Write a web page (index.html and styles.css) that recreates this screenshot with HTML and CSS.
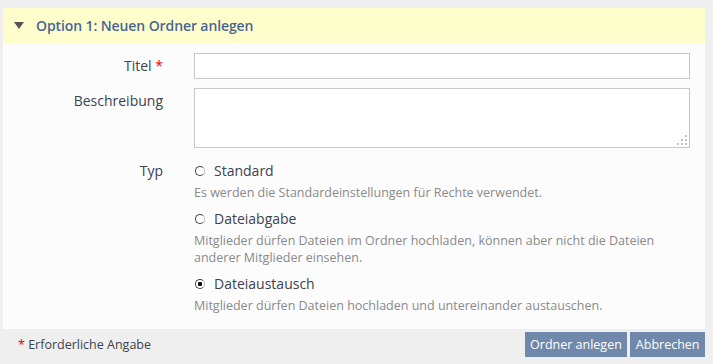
FILE: index.html
```html
<!DOCTYPE html>
<html lang="de">
<head>
    <meta charset="UTF-8">
    <title>Neuen Ordner anlegen</title>
    <link rel="stylesheet" href="styles.css">
</head>
<body>
    <form class="folder-form">
        <fieldset class="panel">
            <div class="panel-head">
                <span class="toggle"></span>
                <span class="panel-title">Option 1: Neuen Ordner anlegen</span>
            </div>

            <div class="panel-body">
                <label class="row-label" for="title">Titel <span class="req">*</span></label>
                <input class="text-input" id="title" type="text">

                <label class="row-label" for="desc">Beschreibung</label>
                <div class="area-wrap">
                    <textarea class="text-area" id="desc"></textarea>
                    <svg class="grip" width="10" height="10" viewBox="0 0 10 10">
                        <rect x="8" y="0" width="2" height="2" fill="#c4c4c4"/>
                        <rect x="4" y="4" width="2" height="2" fill="#c4c4c4"/>
                        <rect x="8" y="4" width="2" height="2" fill="#c4c4c4"/>
                        <rect x="0" y="8" width="2" height="2" fill="#c4c4c4"/>
                        <rect x="4" y="8" width="2" height="2" fill="#c4c4c4"/>
                        <rect x="8" y="8" width="2" height="2" fill="#c4c4c4"/>
                    </svg>
                </div>

                <span class="row-label type-label">Typ</span>
                <div class="type-list">
                    <label class="option">
                        <input class="radio" type="radio" name="type">
                        <span>Standard</span>
                    </label>
                    <p class="hint">Es werden die Standardeinstellungen für Rechte verwendet.</p>

                    <label class="option">
                        <input class="radio" type="radio" name="type">
                        <span>Dateiabgabe</span>
                    </label>
                    <p class="hint">Mitglieder dürfen Dateien im Ordner hochladen, können aber nicht die Dateien anderer Mitglieder einsehen.</p>

                    <label class="option">
                        <input class="radio" type="radio" name="type" checked>
                        <span>Dateiaustausch</span>
                    </label>
                    <p class="hint">Mitglieder dürfen Dateien hochladen und untereinander austauschen.</p>
                </div>
            </div>
        </fieldset>

        <div class="form-foot">
            <span class="req-note"><span class="req">*</span> Erforderliche Angabe</span>
            <div class="buttons">
                <button class="button" type="button">Ordner anlegen</button>
                <button class="button" type="button">Abbrechen</button>
            </div>
        </div>
    </form>
</body>
</html>
```

FILE: styles.css
```css
:root {
    --page-bg: #efefef;
    --panel-bg: #fcfcfc;
    --head-bg: #fefecc;
    --head-text: #4a6592;
    --text: #3c434e;
    --hint: #8a8a8a;
    --border: #c8c8c8;
    --button: #6f88ab;
}

body, html {
    margin: 0;
    padding: 0;
    background: var(--page-bg);
    font-family: 'Open Sans', 'Liberation Sans', sans-serif;
    color: var(--text);
}

.folder-form {
    padding: 8px 8px 0 3px;
}

.panel {
    margin: 0;
    padding: 0;
    border: none;
    background: var(--panel-bg);
}

.panel-head {
    height: 35px;
    display: flex;
    align-items: center;
    background: var(--head-bg);
    padding-left: 11px;
}

.toggle {
    width: 0;
    height: 0;
    border-left: 5px solid transparent;
    border-right: 5px solid transparent;
    border-top: 7px solid #555;
    margin-right: 12px;
}

.panel-title {
    font-size: 14px;
    font-weight: 600;
    letter-spacing: -0.1px;
    color: var(--head-text);
}

.panel-body {
    display: grid;
    grid-template-columns: 160px 1fr;
    column-gap: 31px;
    row-gap: 9px;
    padding: 10px 15px 15px 0;
}

.row-label {
    text-align: right;
    font-size: 14px;
    line-height: 20px;
    padding-top: 3px;
}

.req {
    color: #e00;
}

.text-input {
    box-sizing: border-box;
    height: 26px;
    margin: 0;
    border: 1px solid var(--border);
    background: #fff;
    font: inherit;
}

.area-wrap {
    position: relative;
}

.text-area {
    display: block;
    box-sizing: border-box;
    width: 100%;
    height: 60px;
    margin: 0;
    border: 1px solid var(--border);
    background: #fff;
    resize: none;
    font: inherit;
}

.grip {
    position: absolute;
    right: 3px;
    bottom: 3px;
}

.type-label {
    padding-top: 0;
    margin-top: 4px;
}

.type-list {
    margin-top: 4px;
}

.option {
    display: flex;
    align-items: center;
    gap: 9px;
    font-size: 14px;
    line-height: 20px;
    padding-left: 1px;
}

.radio {
    appearance: none;
    box-sizing: border-box;
    width: 10px;
    height: 10px;
    margin: 0;
    border: 1.5px solid #444;
    border-right-color: #bbb;
    border-radius: 50%;
    background: #fff;
}

.radio:checked {
    background: radial-gradient(circle, #111 0 2px, #fff 2.5px);
}

.hint {
    margin: 3px 0 8px;
    font-size: 12.5px;
    line-height: 17px;
    color: var(--hint);
}

.hint:last-child {
    margin-bottom: 0;
}

.form-foot {
    display: flex;
    justify-content: space-between;
    align-items: flex-start;
    padding-top: 3px;
}

.req-note {
    font-size: 12.5px;
    padding: 4px 0 0 15px;
}

.buttons {
    display: flex;
    gap: 3px;
}

.button {
    height: 25px;
    padding: 0 5.5px;
    border: none;
    background: var(--button);
    color: #fff;
    font-family: inherit;
    font-size: 12.5px;
}
```
